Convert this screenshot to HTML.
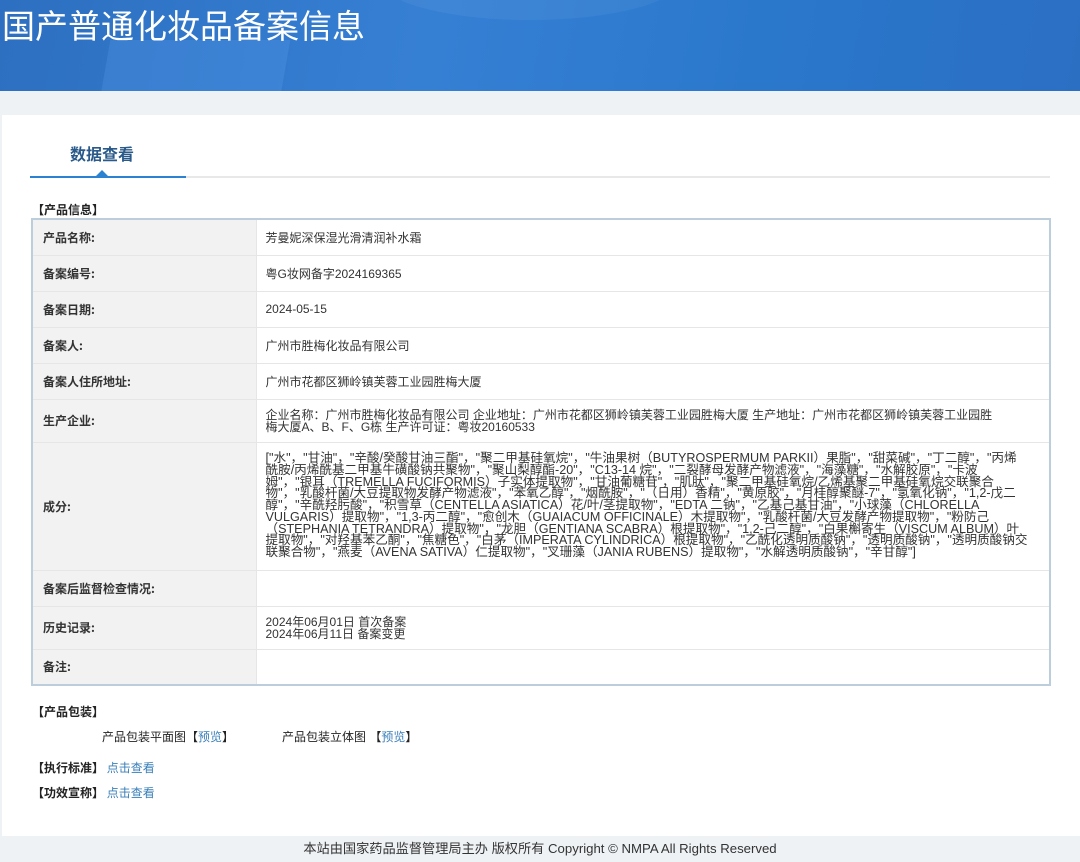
<!DOCTYPE html>
<html><head><meta charset="utf-8"><style>
*{margin:0;padding:0;box-sizing:border-box}
body{width:1080px;height:860px;background:#eef2f5;font-family:"Liberation Sans","Noto Sans CJK SC",sans-serif;color:#333;position:relative;overflow:hidden;font-size:12px}
.hdr{position:absolute;left:0;top:0;width:1080px;height:91px;background:linear-gradient(100deg,#2d6fc0 0%,#3680d4 40%,#2a78cc 70%,#2b6fc3 100%);overflow:hidden}
.hdr h1{position:absolute;left:2px;top:0px;font-size:33px;font-weight:normal;color:#fff;font-family:"Noto Sans CJK SC",sans-serif}
.panel{position:absolute;left:2px;top:115px;width:1078px;height:721px;background:#fff}
.tab{position:absolute;left:70px;top:141px;font-size:16px;font-weight:bold;color:#2a5a8a;font-family:"Noto Sans CJK SC",sans-serif}
.line{position:absolute;left:30px;top:176px;width:1020px;height:2px;background:#e8e8e8}
.line2{position:absolute;left:30px;top:176px;width:156px;height:2px;background:#2b82d0}
.tri{position:absolute;left:96px;top:170px;width:0;height:0;border-left:6px solid transparent;border-right:6px solid transparent;border-bottom:6px solid #2b82d0}
.sec{position:absolute;font-size:12px;font-weight:bold;color:#222;font-family:"Noto Sans CJK SC",sans-serif}
table{position:absolute;left:31px;top:218px;width:1020px;border-collapse:collapse;border:2px solid #bccddc}
td{border:1px solid #e6e6e6;font-size:12px;vertical-align:middle}
td.l{width:224px;background:#f2f2f2;font-weight:bold;padding-left:10px;color:#333;font-family:"Noto Sans CJK SC",sans-serif}
td.v{padding-left:9px;color:#333}
.ing{font-size:12.6px;line-height:11.8px;padding-top:3px;padding-bottom:3px;white-space:nowrap}
.txt{position:absolute;font-size:12px;color:#222}
a{color:#3a7fb8;text-decoration:none}
.foot{position:absolute;left:0;top:836px;width:1080px;height:24px;text-align:center;font-size:13.2px;line-height:26px;color:#333}
</style></head><body>
<div class="hdr"><div style="position:absolute;left:105px;top:40px;width:180px;height:60px;background:rgba(90,160,240,0.25);transform:skewX(-10deg)"></div><div style="position:absolute;left:380px;top:-60px;width:300px;height:80px;border-radius:50%;background:rgba(255,255,255,0.05)"></div><h1>国产普通化妆品备案信息</h1></div>
<div class="panel"></div>
<div class="tab">数据查看</div>
<div class="line"></div><div class="line2"></div><div class="tri"></div>
<div class="sec" style="left:32px;top:201px">【产品信息】</div>
<table>
<tr style="height:36px"><td class="l">产品名称:</td><td class="v">芳曼妮深保湿光滑清润补水霜</td></tr>
<tr style="height:36px"><td class="l">备案编号:</td><td class="v">粤G妆网备字2024169365</td></tr>
<tr style="height:36px"><td class="l">备案日期:</td><td class="v">2024-05-15</td></tr>
<tr style="height:36px"><td class="l">备案人:</td><td class="v">广州市胜梅化妆品有限公司</td></tr>
<tr style="height:36px"><td class="l">备案人住所地址:</td><td class="v">广州市花都区狮岭镇芙蓉工业园胜梅大厦</td></tr>
<tr style="height:43px"><td class="l">生产企业:</td><td class="v" style="line-height:12px">企业名称：广州市胜梅化妆品有限公司 企业地址：广州市花都区狮岭镇芙蓉工业园胜梅大厦 生产地址：广州市花都区狮岭镇芙蓉工业园胜<br>梅大厦A、B、F、G栋 生产许可证：粤妆20160533</td></tr>
<tr style="height:128px"><td class="l">成分:</td><td class="v ing">["水"，"甘油"，"辛酸/癸酸甘油三酯"，"聚二甲基硅氧烷"，"牛油果树（BUTYROSPERMUM PARKII）果脂"，"甜菜碱"，"丁二醇"，"丙烯<br>酰胺/丙烯酰基二甲基牛磺酸钠共聚物"，"聚山梨醇酯-20"，"C13-14 烷"，"二裂酵母发酵产物滤液"，"海藻糖"，"水解胶原"，"卡波<br>姆"，"银耳（TREMELLA FUCIFORMIS）子实体提取物"，"甘油葡糖苷"，"肌肽"，"聚二甲基硅氧烷/乙烯基聚二甲基硅氧烷交联聚合<br>物"，"乳酸杆菌/大豆提取物发酵产物滤液"，"苯氧乙醇"，"烟酰胺"，"（日用）香精"，"黄原胶"，"月桂醇聚醚-7"，"氢氧化钠"，"1,2-戊二<br>醇"，"辛酰羟肟酸"，"积雪草（CENTELLA ASIATICA）花/叶/茎提取物"，"EDTA 二钠"，"乙基己基甘油"，"小球藻（CHLORELLA<br>VULGARIS）提取物"，"1,3-丙二醇"，"愈创木（GUAIACUM OFFICINALE）木提取物"，"乳酸杆菌/大豆发酵产物提取物"，"粉防己<br>（STEPHANIA TETRANDRA）提取物"，"龙胆（GENTIANA SCABRA）根提取物"，"1,2-己二醇"，"白果槲寄生（VISCUM ALBUM）叶<br>提取物"，"对羟基苯乙酮"，"焦糖色"，"白茅（IMPERATA CYLINDRICA）根提取物"，"乙酰化透明质酸钠"，"透明质酸钠"，"透明质酸钠交<br>联聚合物"，"燕麦（AVENA SATIVA）仁提取物"，"叉珊藻（JANIA RUBENS）提取物"，"水解透明质酸钠"，"辛甘醇"]</td></tr>
<tr style="height:36px"><td class="l">备案后监督检查情况:</td><td class="v"></td></tr>
<tr style="height:43px"><td class="l">历史记录:</td><td class="v" style="line-height:12px">2024年06月01日 首次备案<br>2024年06月11日 备案变更</td></tr>
<tr style="height:36px"><td class="l">备注:</td><td class="v"></td></tr>
</table>
<div class="sec" style="left:32px;top:703px">【产品包装】</div>
<div class="txt" style="left:102px;top:728px">产品包装平面图【<a>预览</a>】</div>
<div class="txt" style="left:282px;top:728px">产品包装立体图 【<a>预览</a>】</div>
<div class="sec" style="left:32px;top:759px">【执行标准】 <a style="font-weight:normal">点击查看</a></div>
<div class="sec" style="left:32px;top:784px">【功效宣称】 <a style="font-weight:normal">点击查看</a></div>
<div class="foot">本站由国家药品监督管理局主办 版权所有 Copyright © NMPA All Rights Reserved</div>
</body></html>
